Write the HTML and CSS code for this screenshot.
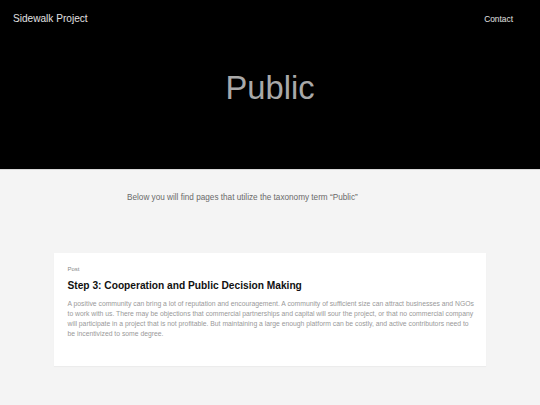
FILE: index.html
```html
<!DOCTYPE html>
<html>
<head>
<meta charset="utf-8">
<link rel="stylesheet" href="styles.css">
</head>
<body>
<header class="hero">
  <nav class="nav">
    <a class="brand" href="#">Sidewalk Project</a>
    <a class="nav-link" href="#">Contact</a>
  </nav>
  <h1 class="hero-title">Public</h1>
</header>
<main class="main">
  <p class="intro">Below you will find pages that utilize the taxonomy term “Public”</p>
  <article class="card">
    <div class="card-type">Post</div>
    <h2 class="card-title">Step 3: Cooperation and Public Decision Making</h2>
    <p class="card-text">A positive community can bring a lot of reputation and encouragement. A community of sufficient size can attract businesses and NGOs to work with us. There may be objections that commercial partnerships and capital will sour the project, or that no commercial company will participate in a project that is not profitable. But maintaining a large enough platform can be costly, and active contributors need to be incentivized to some degree.</p>
  </article>
</main>
</body>
</html>
```
FILE: styles.css
```css
* { box-sizing: border-box; }
html, body { margin: 0; padding: 0; }
body {
  font-family: "Liberation Sans", Arial, sans-serif;
  background: #f4f4f4;
}
.hero {
  background: #000;
  height: 170px;
  border-bottom: 1px solid #d8d8d8;
  display: flex;
  flex-direction: column;
}
.nav {
  display: flex;
  justify-content: space-between;
  align-items: flex-start;
  padding: 13px 27px 0 13px;
}
.brand {
  color: #e2e2e2;
  text-decoration: none;
  font-size: 10.1px;
}
.nav-link {
  color: #e2e2e2;
  text-decoration: none;
  font-size: 8.4px;
  margin-top: 0.5px;
}
.hero-title {
  margin: 45px 0 0;
  text-align: center;
  font-weight: normal;
  font-size: 32.7px;
  color: #a9a9a9;
}
.main {
  padding: 23px 54px 40px;
}
.intro {
  margin: 0 0 51px 73px;
  font-size: 8.2px;
  color: #6a6a6a;
}
.card {
  background: #fff;
  padding: 13px 12px 27px 13.5px;
  box-shadow: 0 1px 1px rgba(0, 0, 0, 0.03);
}
.card-type {
  font-size: 6px;
  color: #888;
}
.card-title {
  margin: 7.5px 0 8px;
  font-size: 10.2px;
  font-weight: bold;
  color: #111;
}
.card-text {
  margin: 0;
  font-size: 6.8px;
  line-height: 10px;
  color: #999;
}
```
